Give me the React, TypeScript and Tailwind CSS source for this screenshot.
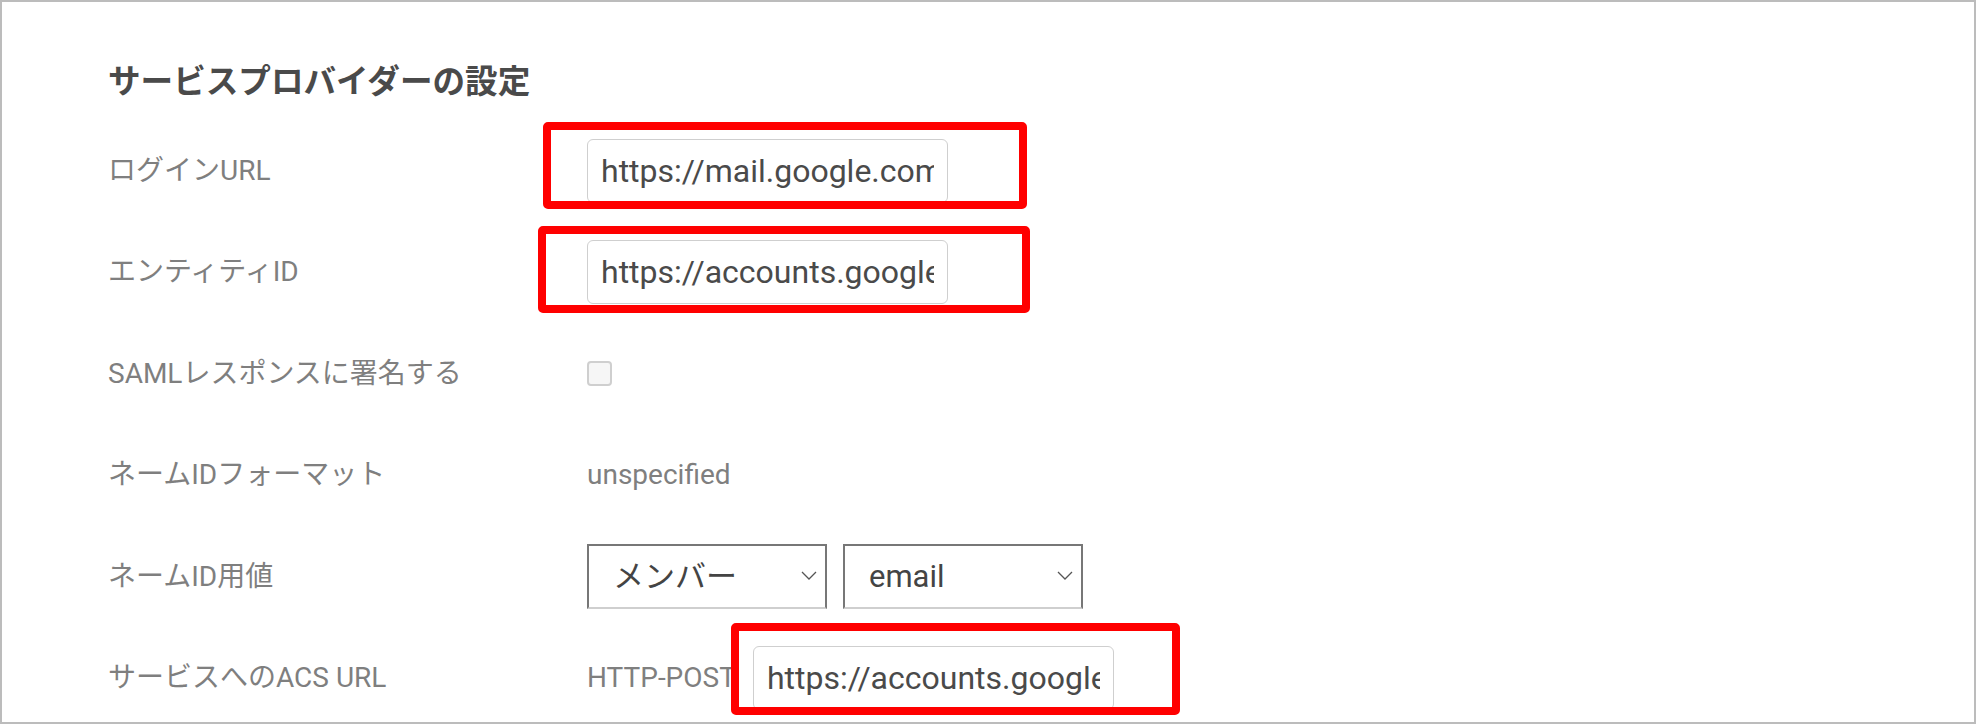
const font = "font-['Roboto','Noto_Sans_CJK_JP',sans-serif]";

function Row({ label, children }: { label: string; children: React.ReactNode }) {
  return (
    <div className="flex h-[101.5px] items-center">
      <div className="w-[479px] shrink-0 text-[28px] text-[#7f7f7f]">{label}</div>
      <div className="flex items-center">{children}</div>
    </div>
  );
}

function TextInput({ value }: { value: string }) {
  return (
    <input
      readOnly
      value={value}
      className="h-[64px] w-[361px] rounded-[6px] border-[1.5px] border-[#cfcfcf] bg-white px-[13px] text-[32px] text-[#4a4a4a] outline-none"
    />
  );
}

function Select({ value }: { value: string }) {
  return (
    <div className="relative h-[65px] w-[240px]">
      <select
        defaultValue={value}
        className="h-full w-full appearance-none border-2 border-[#777] border-b-[#cfcfcf] bg-white pl-[24px] text-[31px] text-[#444] outline-none"
      >
        <option>{value}</option>
      </select>
      <svg
        viewBox="0 0 16 9"
        className="pointer-events-none absolute right-[10px] top-[27px] h-[9px] w-[16px]"
        fill="none"
        stroke="#555"
        strokeWidth="1.3"
      >
        <polyline points="1,1 8,8 15,1" />
      </svg>
    </div>
  );
}

function Highlight({ className }: { className: string }) {
  return (
    <div
      className={`pointer-events-none absolute rounded-[5px] border-[8px] border-[#ff0000] ${className}`}
    />
  );
}

export default function App() {
  return (
    <div
      className={`relative h-[724px] w-[1976px] overflow-hidden border-2 border-[#bcbcbc] bg-white pl-[106px] ${font}`}
    >
      <h2 className="mt-[60px] h-[40px] text-[32.6px] font-bold leading-[40px] text-[#4a4a4a]">
        サービスプロバイダーの設定
      </h2>
      <div className="mt-[18px]">
        <Row label="ログインURL">
          <TextInput value="https://mail.google.com/a/example.com" />
        </Row>
        <Row label="エンティティID">
          <TextInput value="https://accounts.google.com/samlrp/metadata" />
        </Row>
        <Row label="SAMLレスポンスに署名する">
          <div className="h-[25px] w-[25px] rounded-[4px] border-2 border-[#cfcfcf] bg-[#f6f6f6]" />
        </Row>
        <Row label="ネームIDフォーマット">
          <span className="text-[28px] text-[#7f7f7f]">unspecified</span>
        </Row>
        <Row label="ネームID用値">
          <div className="flex gap-[16px]">
            <Select value="メンバー" />
            <Select value="email" />
          </div>
        </Row>
        <Row label="サービスへのACS URL">
          <span className="mr-[17px] text-[28px] text-[#7f7f7f]">HTTP-POST</span>
          <TextInput value="https://accounts.google.com/samlrp/acs" />
        </Row>
      </div>

      <Highlight className="left-[541px] top-[120px] h-[87px] w-[484px]" />
      <Highlight className="left-[536px] top-[224px] h-[87px] w-[492px]" />
      <Highlight className="left-[729px] top-[621px] h-[92px] w-[449px]" />
    </div>
  );
}
